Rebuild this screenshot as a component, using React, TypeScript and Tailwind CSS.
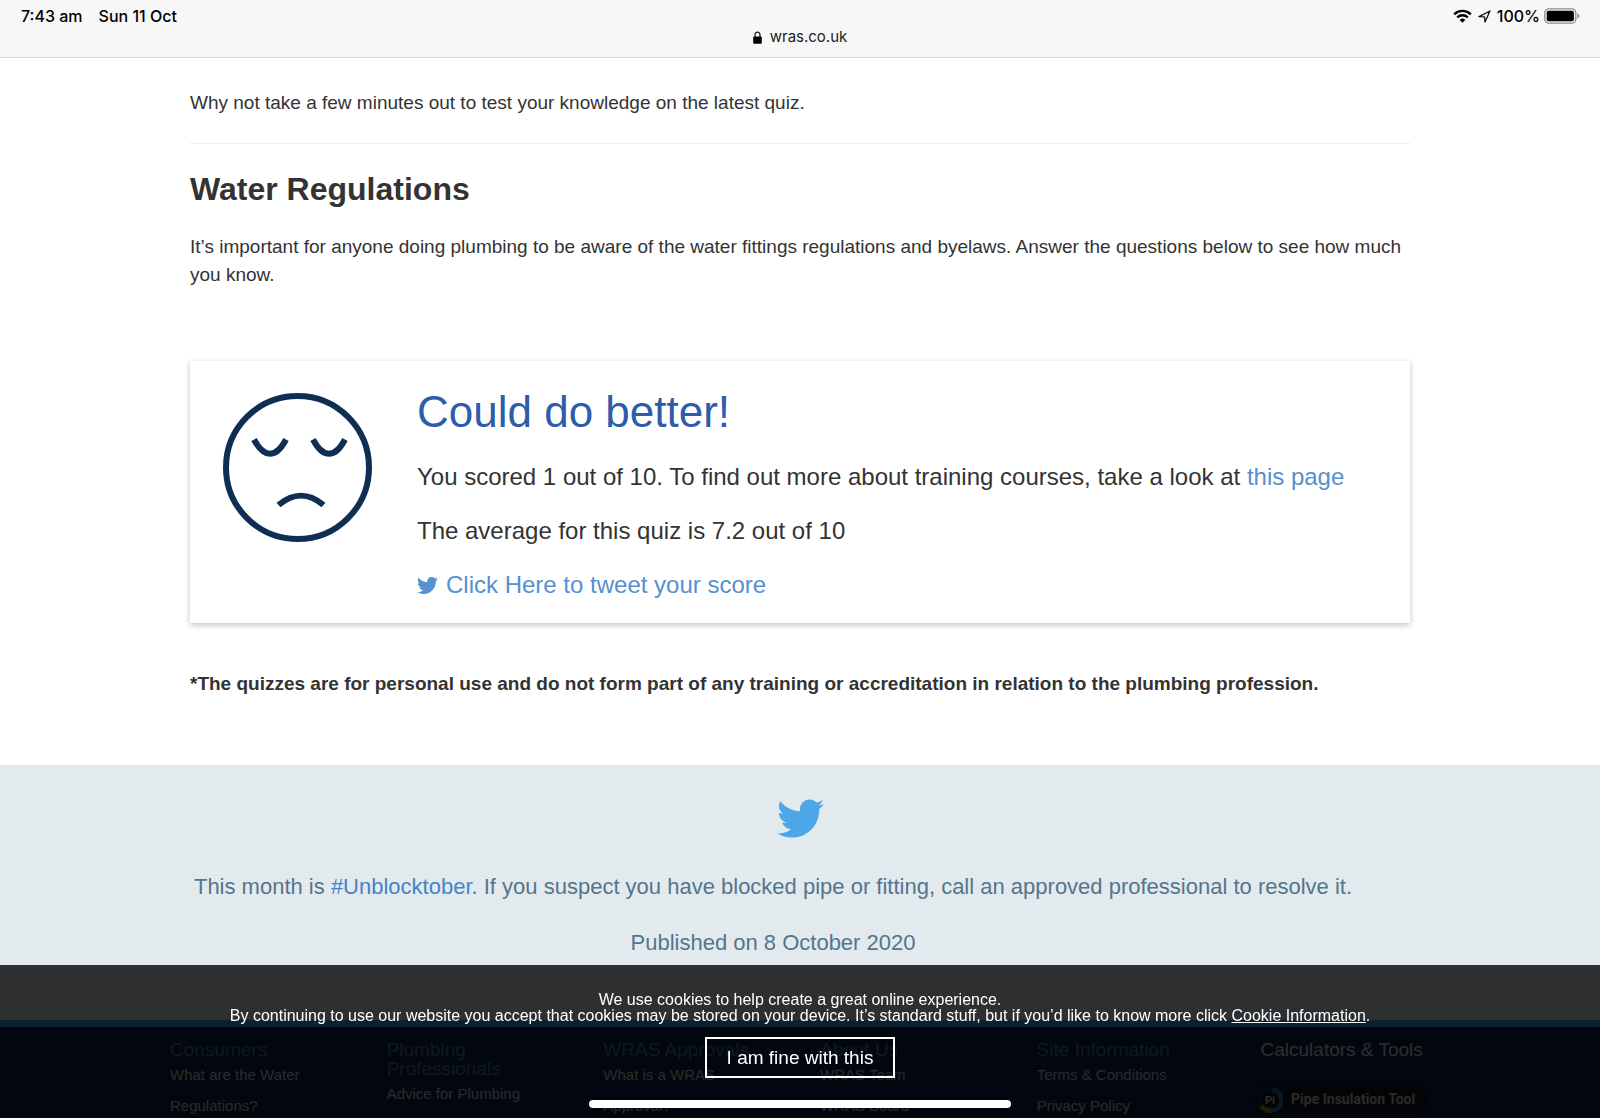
import React from "react";
import { FaTwitter } from "react-icons/fa";

const footerColumns = [
  { title: "Consumers", links: ["What are the Water Regulations?"] },
  { title: "Plumbing Professionals", links: ["Advice for Plumbing"] },
  { title: "WRAS Approvals", links: ["What is a WRAS Approval?"] },
  { title: "About Us", links: ["WRAS Team", "WRAS Board"] },
  { title: "Site Information", links: ["Terms & Conditions", "Privacy Policy"] },
];

function WifiIcon() {
  return (
    <svg viewBox="0 0 19 14" className="h-[14px] w-[19px]" fill="none" aria-hidden="true">
      <path d="M1.2 5.3a11.8 11.8 0 0 1 16.6 0" stroke="#000" strokeWidth="2.4" />
      <path d="M4.2 8.4a7.6 7.6 0 0 1 10.6 0" stroke="#000" strokeWidth="2.3" />
      <path d="M6.7 10.9a4.1 4.1 0 0 1 5.6 0L9.5 13.7Z" fill="#000" />
    </svg>
  );
}

function LocationIcon() {
  return (
    <svg viewBox="0 0 13 13" className="h-[13px] w-[13px]" fill="none" aria-hidden="true">
      <path d="M1 6.600 12 1 7 12 6.500 6.900Z" stroke="#111" strokeWidth="1.3" strokeLinejoin="round" />
    </svg>
  );
}

function BatteryIcon() {
  return (
    <svg viewBox="0 0 36 16" className="h-4 w-9" aria-hidden="true">
      <rect x="0.8" y="0.8" width="31" height="14.4" rx="4" fill="#f2f2f2" stroke="#8e8e8e" strokeWidth="1.3" />
      <rect x="2.7" y="2.7" width="27.2" height="10.6" rx="2" fill="#000" />
      <path d="M33.4 5.6c1.2.3 1.9 1.2 1.9 2.4s-.7 2.1-1.9 2.4Z" fill="#8e8e8e" />
    </svg>
  );
}

function LockIcon() {
  return (
    <svg viewBox="0 0 9 13" className="h-[13px] w-[9px]" aria-hidden="true">
      <path d="M2 6.500V3.700a2.500 2.500 0 0 1 5 0V6.500" fill="none" stroke="#111" strokeWidth="1.200" />
      <rect x="0.200" y="5.600" width="8.600" height="7.200" rx="1" fill="#000" />
    </svg>
  );
}

function SadFace() {
  return (
    <svg viewBox="0 0 150 150" className="size-[150px] shrink-0" fill="none" stroke="#0f2e54" role="img" aria-label="Sad face">
      <circle cx="75.500" cy="74.500" r="71.500" strokeWidth="6" />
      <path d="M32 46.500C42 65.500 54 65.500 64 46.500" strokeWidth="6" />
      <path d="M91 46.500C101 65.500 113 65.500 123 46.500" strokeWidth="6" />
      <path d="M56.500 112C71 99.500 87 99.500 101.500 112" strokeWidth="6" />
    </svg>
  );
}

function PiBadge() {
  return (
    <svg viewBox="0 0 26 26" className="size-[26px] shrink-0" fill="none" aria-hidden="true">
      <path d="M15 2.500a10.500 10.500 0 0 1-2 21" stroke="#247bb0" strokeWidth="5" />
      <path d="M14 23.500A10.500 10.500 0 0 1 4 18.500" stroke="#809a20" strokeWidth="5" />
      <path d="M4 18.500A10.500 10.500 0 0 1 15 2.500" stroke="#102c4a" strokeWidth="5" />
      <text x="13" y="17" textAnchor="middle" fontSize="11" fontWeight="700" fill="#ddd" className="font-['Roboto',sans-serif]">Pi</text>
    </svg>
  );
}

export default function App() {
  return (
    <div className="flex min-h-screen flex-col bg-white font-['Liberation_Sans',Arial,sans-serif] text-[#333]">
      <header className="sticky top-0 h-[58px] shrink-0 border-b border-[#d8d8d8] bg-[#f7f7f7] font-['Inter',sans-serif] text-black">
        <div className="flex h-8 items-center justify-between pr-5 pl-[21px] text-base font-medium">
          <div className="flex gap-4">
            <span>7:43 am</span>
            <span>Sun 11 Oct</span>
          </div>
          <div className="flex items-center gap-1">
            <WifiIcon />
            <span className="px-0.5"><LocationIcon /></span>
            <span>100%</span>
            <BatteryIcon />
          </div>
        </div>
        <div className="flex h-[10px] items-center justify-center gap-2 text-[15px] text-[#222]">
          <LockIcon />
          <span>wras.co.uk</span>
        </div>
      </header>

      <main className="mx-auto w-full max-w-[1260px] shrink-0 px-5 pt-[31px] text-[19px] leading-7">
        <p>Why not take a few minutes out to test your knowledge on the latest quiz.</p>
        <hr className="mt-[26px] border-[#eee]" />
        <h2 className="mt-[25px] text-[32px] leading-10 font-bold">Water Regulations</h2>
        <p className="mt-6">
          It’s important for anyone doing plumbing to be aware of the water fittings regulations and byelaws. Answer the questions below to see how much you know.
        </p>

        <section className="mt-[72px] flex gap-[45px] bg-white px-8 pt-8 pb-[18px] shadow-[0_2px_6px_rgba(0,0,0,0.25)]">
          <SadFace />
          <div className="text-2xl">
            <h3 className="text-[44px] leading-[38px] text-[#2d5caa]">Could do better!</h3>
            <p className="mt-[26px] leading-10">
              You scored 1 out of 10. To find out more about training courses, take a look at <a href="#training" className="text-[#5590d0]">this page</a>
            </p>
            <p className="mt-[14px] leading-10">The average for this quiz is 7.2 out of 10</p>
            <a href="#tweet" className="mt-[14px] flex items-center gap-2 leading-10 text-[#5590d0]">
              <FaTwitter className="size-[21px]" />
              Click Here to tweet your score
            </a>
          </div>
        </section>

        <p className="mt-[47px] font-bold">*The quizzes are for personal use and do not form part of any training or accreditation in relation to the plumbing profession.</p>
      </main>

      <section className="mt-[67px] h-[255px] shrink-0 bg-[#e2eaed] pt-[30px] text-[22px] leading-8 text-[#54758d]">
        <FaTwitter className="mx-auto size-[47px] text-[#4ba7e8]" />
        <div className="mx-auto max-w-[1300px] pr-[54px] text-center">
          <p className="mt-[29px]">
            This month is <a href="#unblocktober" className="text-[#4783c6]">#Unblocktober</a>. If you suspect you have blocked pipe or fitting, call an approved professional to resolve it.
          </p>
          <p className="mt-6">Published on 8 October 2020</p>
        </div>
      </section>

      <footer className="flex-1 border-t-[7px] border-[#37a5e6] bg-[#0a234b]">
        <div className="mx-auto grid w-full max-w-[1300px] grid-cols-6 pt-[13px] text-[15px] leading-[31px] text-[#d0d0d0]">
          {footerColumns.map((column) => (
            <nav key={column.title} className="px-5" aria-label={column.title}>
              <h4 className="text-[19px] leading-[19px] text-[#4379ae]">{column.title}</h4>
              <ul>
                {column.links.map((link) => (
                  <li key={link} className="max-w-[150px]"><a href="#footer">{link}</a></li>
                ))}
              </ul>
            </nav>
          ))}
          <div className="flex flex-col items-center">
            <h4 className="text-[19px] leading-[19px] text-[#e0e0e0]">Calculators &amp; Tools</h4>
            <a href="#tool" className="mt-[26px] flex h-[29px] items-center gap-2 rounded-full bg-[#14161c] pr-[13px] pl-[2px] font-['Roboto',sans-serif] text-[14px] font-bold">
              <PiBadge />
              Pipe Insulation Tool
            </a>
          </div>
        </div>
      </footer>

      <aside className="fixed inset-x-0 bottom-0 h-[153px] bg-black/80 pt-[27px] text-center text-base leading-4 text-white" aria-label="Cookie notice">
        <p>We use cookies to help create a great online experience.</p>
        <p>
          By continuing to use our website you accept that cookies may be stored on your device. It’s standard stuff, but if you’d like to know more click <a href="#cookies" className="underline">Cookie Information</a>.
        </p>
        <button type="button" className="mt-[13px] h-[41px] border-2 border-white px-5 text-[19px] leading-6">I am fine with this</button>
      </aside>

      <div className="fixed bottom-[10px] left-1/2 h-2 w-[422px] -translate-x-1/2 rounded-full bg-white" />
    </div>
  );
}
